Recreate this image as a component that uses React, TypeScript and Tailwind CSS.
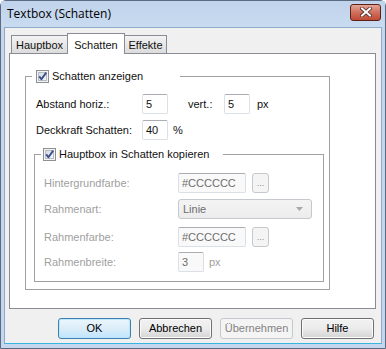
import React from 'react';

const font = { fontFamily: '"Liberation Sans", Arial, sans-serif' };

function Check({ disabled = false }: { disabled?: boolean }) {
  return (
    <svg width="13" height="13" viewBox="0 0 13 13" className="shrink-0">
      <defs>
        <linearGradient id="cbg" x1="0" y1="0" x2="1" y2="1">
          <stop offset="0" stopColor="#d4dbe6" />
          <stop offset="1" stopColor="#f6f8fb" />
        </linearGradient>
      </defs>
      <rect x="0.5" y="0.5" width="12" height="12" fill="#f4f4f4" stroke="#8e8f8f" />
      <rect x="2.5" y="2.5" width="8" height="8" fill="url(#cbg)" stroke="#b6bcc6" />
      <path
        d="M3.2 6.4 L5.4 9.2 L10.2 2.6"
        fill="none"
        stroke={disabled ? '#9aa3b5' : '#3b4f8a'}
        strokeWidth="1.9"
        strokeLinejoin="round"
      />
    </svg>
  );
}

function TextInput({ value, w, disabled = false }: { value: string; w: string; disabled?: boolean }) {
  return (
    <div
      className={`${w} h-[20px] shrink-0 rounded-[2px] border border-[#dbdfe6] border-t-[#abadb3] flex items-center px-[3px] text-[11px] ${
        disabled ? 'bg-[#f9f9f9] text-[#6d6d6d]' : 'bg-white text-[#111]'
      }`}
    >
      {value}
    </div>
  );
}

function DotsButton() {
  return (
    <div className="w-[17px] h-[20px] ml-[6px] rounded-[3px] border border-[#c5c8cc] bg-[#f4f4f4] flex items-end justify-center pb-[4px] text-[9px] leading-none text-[#8c8c8c]">
      ...
    </div>
  );
}

function Button({ label, kind = 'normal' }: { label: string; kind?: 'normal' | 'default' | 'disabled' }) {
  const cls =
    kind === 'default'
      ? 'border-[#3c7fb1] bg-gradient-to-b from-[#eaf6fd] via-[#dcedf8] to-[#bee6fd] text-black shadow-[inset_0_0_0_1px_#bfe6f9]'
      : kind === 'disabled'
      ? 'border-[#c5c8cc] bg-[#f4f4f4] text-[#838383]'
      : 'border-[#707070] bg-gradient-to-b from-[#f2f2f2] via-[#ebebeb] to-[#d4d4d4] text-black shadow-[inset_0_0_0_1px_#fbfbfb]';
  return (
    <div className={`w-[73px] h-[21px] rounded-[3px] border flex items-center justify-center text-[11px] ${cls}`}>
      {label}
    </div>
  );
}

export default function App() {
  return (
    <div className="w-[386px] h-[349px] overflow-hidden bg-white" style={font}>
      <div className="w-[386px] h-[349px] flex flex-col rounded-t-[6px] border border-[#5b6a7e] bg-[#c4d7ee]">
        {/* title bar */}
        <div className="h-[26px] shrink-0 flex items-center justify-between pl-[6px] pr-[4px] bg-gradient-to-b from-[#c0d3ec] to-[#c9dbf0]">
          <span className="text-[12px] text-black" style={{ fontFamily: '"Open Sans", "Liberation Sans", sans-serif' }}>
            Textbox (Schatten)
          </span>
          <div className="w-[31px] h-[17px] mb-[4px] rounded-[3px] border border-[#5a2219] bg-gradient-to-b from-[#e3a597] via-[#cf6f5d] to-[#c14a33] flex items-center justify-center">
            <svg width="12" height="10" viewBox="0 0 12 10">
              <path d="M2 1.5 L10 8.5 M10 1.5 L2 8.5" stroke="#4a2a24" strokeWidth="3.6" strokeLinecap="square" />
              <path d="M2 1.5 L10 8.5 M10 1.5 L2 8.5" stroke="#ffffff" strokeWidth="2" strokeLinecap="square" />
            </svg>
          </div>
        </div>

        {/* body */}
        <div className="flex-1 mx-[3px] mb-[4px] border border-[#8fa9c9] border-b-[#38b4e0] bg-[#f0f0f0] flex flex-col pt-[5px] pl-[4px] pr-[6px]">
          {/* tabs */}
          <div className="h-[20px] flex items-end pl-[2px] text-[11px] text-[#111]">
            <div className="w-[57px] h-[18px] border border-b-0 border-[#898c95] bg-gradient-to-b from-[#f3f3f3] to-[#dcdcdc] flex items-center justify-center pt-[1px]">
              Hauptbox
            </div>
            <div className="relative z-10 w-[58px] h-[21px] -mb-[1px] -ml-[1px] border border-b-0 border-[#898c95] bg-white flex items-start justify-center pt-[3px]">
              Schatten
            </div>
            <div className="w-[43px] h-[18px] -ml-[1px] border border-b-0 border-[#898c95] bg-gradient-to-b from-[#f3f3f3] to-[#dcdcdc] flex items-center justify-center pt-[1px]">
              Effekte
            </div>
          </div>

          {/* panel */}
          <div className="h-[256px] w-[367px] border border-[#898c95] bg-white pl-[15px] pt-[15px] text-[11px] text-[#111]">
            <fieldset className="w-[305px] h-[221px] border border-[#a0a0a0]">
              <legend className="ml-[6px] w-[148px] pl-[4px] h-[15px] flex items-center gap-[3px]">
                <Check />
                <span>Schatten anzeigen</span>
              </legend>

              <div className="pl-[10px] pt-[10px] flex flex-col">
                <div className="flex items-center">
                  <span className="w-[106px]">Abstand horiz.:</span>
                  <TextInput value="5" w="w-[26px]" />
                  <span className="w-[36px] ml-[20px]">vert.:</span>
                  <TextInput value="5" w="w-[26px]" />
                  <span className="ml-[7px]">px</span>
                </div>
                <div className="flex items-center mt-[6px]">
                  <span className="w-[106px]">Deckkraft Schatten:</span>
                  <TextInput value="40" w="w-[26px]" />
                  <span className="ml-[5px]">%</span>
                </div>

                <fieldset className="mt-[7px] w-[290px] h-[135px] -ml-[2px] border border-[#a0a0a0]">
                  <legend className="ml-[6px] w-[182px] pl-[2px] h-[15px] flex items-center gap-[3px]">
                    <Check />
                    <span>Hauptbox in Schatten kopieren</span>
                  </legend>
                  <div className="pl-[9px] pt-[11px] flex flex-col text-[#a0a0a0]">
                    <div className="flex items-center">
                      <span className="w-[134px]">Hintergrundfarbe:</span>
                      <TextInput value="#CCCCCC" w="w-[68px]" disabled />
                      <DotsButton />
                    </div>
                    <div className="flex items-center mt-[6px]">
                      <span className="w-[134px]">Rahmenart:</span>
                      <div className="w-[134px] h-[20px] rounded-[3px] border border-[#c5c8cc] bg-gradient-to-b from-[#f4f4f4] to-[#ececec] flex items-center justify-between pl-[4px] pr-[8px] text-[#6d6d6d]">
                        <span>Linie</span>
                        <svg width="7" height="4" viewBox="0 0 7 4">
                          <path d="M0 0 L7 0 L3.5 4 Z" fill="#a8a8a8" />
                        </svg>
                      </div>
                    </div>
                    <div className="flex items-center mt-[8px]">
                      <span className="w-[134px]">Rahmenfarbe:</span>
                      <TextInput value="#CCCCCC" w="w-[68px]" disabled />
                      <DotsButton />
                    </div>
                    <div className="flex items-center mt-[5px]">
                      <span className="w-[134px]">Rahmenbreite:</span>
                      <TextInput value="3" w="w-[26px]" disabled />
                      <span className="ml-[5px]">px</span>
                    </div>
                  </div>
                </fieldset>
              </div>
            </fieldset>
          </div>

          {/* buttons */}
          <div className="mt-[9px] flex justify-end gap-[8px] pr-[1px]">
            <Button label="OK" kind="default" />
            <Button label="Abbrechen" />
            <Button label="Übernehmen" kind="disabled" />
            <Button label="Hilfe" />
          </div>
        </div>
      </div>
    </div>
  );
}
